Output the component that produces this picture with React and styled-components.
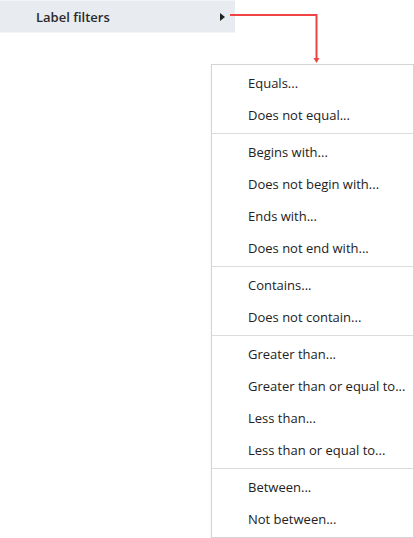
import styled, { createGlobalStyle } from 'styled-components';

const GlobalStyle = createGlobalStyle`
  html, body {
    margin: 0;
    padding: 0;
    background: #fff;
  }
  body {
    font-family: "Open Sans", "Liberation Sans", sans-serif;
    font-size: 13px;
    color: #222;
  }
`;

const groups = [
  ['Equals...', 'Does not equal...'],
  ['Begins with...', 'Does not begin with...', 'Ends with...', 'Does not end with...'],
  ['Contains...', 'Does not contain...'],
  ['Greater than...', 'Greater than or equal to...', 'Less than...', 'Less than or equal to...'],
  ['Between...', 'Not between...'],
];

const Page = styled.div`
  position: relative;
  width: 414px;
  height: 538px;
  overflow: hidden;
`;

// parent menu item that opens the submenu
const ParentItem = styled.div`
  display: flex;
  align-items: center;
  justify-content: space-between;
  box-sizing: border-box;
  width: 235px;
  height: 33px;
  padding: 0 10px 0 36px;
  background: #e8ebf0;
  border-top: 1px solid #f2f4f7;
  border-bottom: 1px solid #f2f4f7;
  font-weight: 600;
  color: #2a2a2a;
`;

const Caret = styled.span`
  width: 0;
  height: 0;
  border-top: 4px solid transparent;
  border-bottom: 4px solid transparent;
  border-left: 5px solid #222;
  margin-top: 1px;
`;

const SubMenu = styled.div`
  box-sizing: border-box;
  width: 203px;
  margin: 31px 0 0 211px;
  background: #fff;
  border: 1px solid #d4d4d4;
  box-shadow: 0 1px 3px rgba(0, 0, 0, 0.06);
`;

const Group = styled.div`
  padding: 2px 0;
  border-top: ${(p) => (p.$first ? 'none' : '1px solid #dcdcdc')};
`;

const Item = styled.div`
  height: 32px;
  line-height: 32px;
  padding-left: 36px;
  color: #222;
  white-space: nowrap;
`;

const Connector = styled.svg`
  position: absolute;
  left: 0;
  top: 0;
  pointer-events: none;
`;

export default function App() {
  return (
    <Page>
      <GlobalStyle />
      <ParentItem>
        <span>Label filters</span>
        <Caret />
      </ParentItem>
      <SubMenu>
        {groups.map((g, i) => (
          <Group key={i} $first={i === 0}>
            {g.map((label) => (
              <Item key={label}>{label}</Item>
            ))}
          </Group>
        ))}
      </SubMenu>
      <Connector width="414" height="80">
        <path d="M230 15 H316.5 V58" fill="none" stroke="#f04444" strokeWidth="2" />
        <polygon points="313.5,58 319.5,58 316.5,63" fill="#f04444" />
      </Connector>
    </Page>
  );
}
